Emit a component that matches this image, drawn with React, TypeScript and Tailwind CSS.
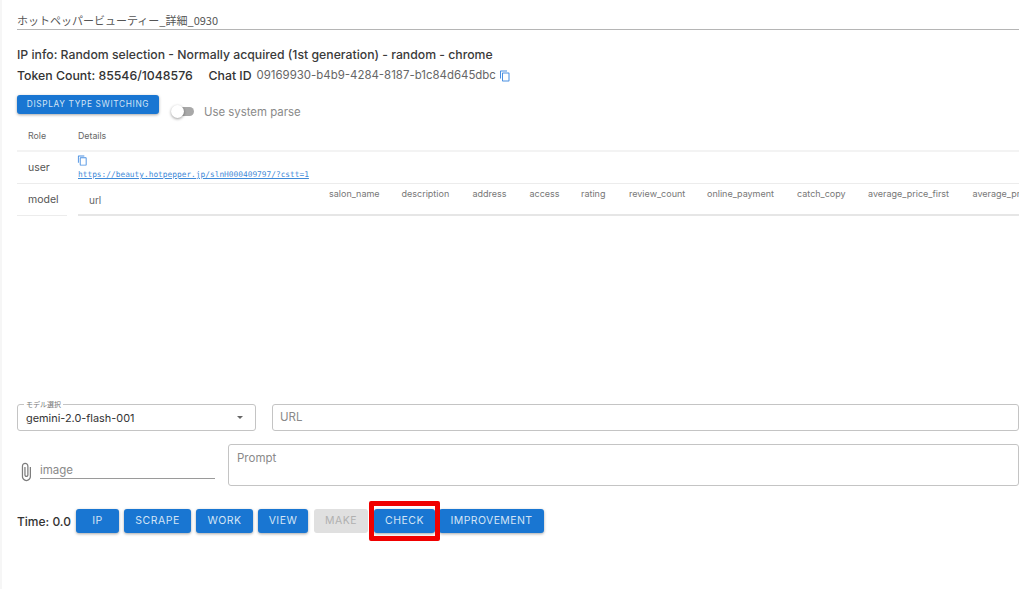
import React from "react";

function CopyIcon({ className }: { className?: string }) {
  return (
    <svg viewBox="0 0 24 24" className={className} fill="currentColor">
      <path d="M16 1H4c-1.100 0-2 .9-2 2v14h2V3h12V1zm3 4H8c-1.100 0-2 .9-2 2v14c0 1.100.9 2 2 2h11c1.100 0 2-.9 2-2V7c0-1.100-.9-2-2-2zm0 16H8V7h11v14z" />
    </svg>
  );
}

const cols: [string, string][] = [
  ["salon_name", "w-[72.5px]"],
  ["description", "w-[71px]"],
  ["address", "w-[57px]"],
  ["access", "w-[51.500px]"],
  ["rating", "w-[48px]"],
  ["review_count", "w-[78px]"],
  ["online_payment", "w-[90px]"],
  ["catch_copy", "w-[71px]"],
  ["average_price_first", "w-[104.500px]"],
  ["average_price_second", "w-[120px]"],
];

function Btn({ children, disabled, className = "" }: { children: React.ReactNode; disabled?: boolean; className?: string }) {
  return (
    <div
      className={
        "flex items-center justify-center rounded-[3px] whitespace-nowrap shrink-0 " +
        (disabled
          ? "bg-[#e0e0e0] text-[#b0b0b0] "
          : "bg-[#1976d2] text-[#d3e4f5] shadow-[0_1px_3px_rgba(0,0,0,0.35)] ") +
        className
      }
    >
      {children}
    </div>
  );
}

const big = "h-6 text-[10.500px] tracking-[0.5px] ";

export default function App() {
  return (
    <div className="w-[1024px] h-[589px] overflow-hidden bg-white border-l-2 border-[#f6f6f6] pl-[15px] pr-[5px] font-['Inter','Noto_Sans_CJK_JP',sans-serif] text-[#333]">
      <div className="pt-[12px] h-[30px] border-b border-[#b5b5b5] text-[11px] leading-[17px] text-[#555] font-['Noto_Sans_CJK_JP',sans-serif]">
        ホットペッパービューティー_詳細_0930
      </div>
      <div className="mt-[17px] text-[12.250px] leading-[16px] text-[#3a3a3a] font-medium whitespace-nowrap">
        IP info: Random selection - Normally acquired (1st generation) - random - chrome
      </div>
      <div className="mt-[5px] h-[16px] flex items-center text-[12.300px] whitespace-nowrap">
        <span className="font-medium text-[#333] w-[191.500px]">Token Count: 85546/1048576</span>
        <span className="font-medium text-[#333] w-[48px]">Chat ID</span>
        <span className="text-[#666] w-[242px] text-[11.450px]">09169930-b4b9-4284-8187-b1c84d645dbc</span>
        <CopyIcon className="w-[12px] h-[12px] text-[#4a90e2]" />
      </div>
      <div className="mt-[11px] flex items-start h-[28px]">
        <Btn className="w-[142px] h-[19px] text-[8.300px] tracking-[0.65px]">DISPLAY TYPE SWITCHING</Btn>
        <div className="relative ml-[12px] mt-[10px] w-[23px] h-[14px]">
          <div className="absolute left-[3px] top-[2px] w-[20px] h-[9px] rounded-full bg-[#a8a8a8]" />
          <div className="absolute left-0 top-0 w-[13px] h-[13px] rounded-full bg-white shadow-[0_1px_3px_rgba(0,0,0,0.4)]" />
        </div>
        <span className="ml-[10px] mt-[9px] text-[11.400px] leading-[16px] text-[#8a8a8a]">Use system parse</span>
      </div>

      <div className="-mt-[5px] h-[34px] pt-[5px] pb-[2px] flex items-center border-b-2 border-[#f3f3f3] text-[8.800px] text-[#666]">
        <span className="ml-[11px] w-[50px]">Role</span>
        <span>Details</span>
      </div>
      <div className="h-[32px] flex border-b border-[#ececec]">
        <span className="ml-[11px] w-[50px] self-center text-[10.500px] text-[#555]">user</span>
        <div className="pt-[3px]">
          <CopyIcon className="w-[11px] h-[11px] -ml-[1px] text-[#4a90e2]" />
          <div className="mt-[4px] font-['DejaVu_Sans_Mono',monospace] text-[7.840px] leading-[10px] text-[#3f8ad8] underline whitespace-nowrap">
            https://beauty.hotpepper.jp/slnH000409797/?cstt=1
          </div>
        </div>
      </div>
      <div className="h-[32px] flex overflow-hidden">
        <div className="w-[50px] border-b border-[#ececec] flex items-center pl-[11px] text-[10.500px] text-[#555] shrink-0">
          model
        </div>
        <div className="ml-[11px] flex-1 min-w-0 border-b-2 border-[#e6e6e6] flex overflow-hidden text-[9px] text-[#777] whitespace-nowrap">
          <div className="w-[251px] shrink-0 pl-[11px] pt-[9px] text-[10px] text-[#666]">url</div>
          {cols.map(([name, w]) => (
            <div key={name} className={w + " shrink-0 pt-[3px]"}>
              {name}
            </div>
          ))}
        </div>
      </div>

      <div className="mt-[188px] flex gap-[16px]">
        <div className="relative w-[239px] h-[27px] border border-[#c4c4c4] rounded-[3px] flex items-center pl-[8px] pt-[1px] text-[10.900px] text-[#333]">
          <span className="absolute left-[6px] -top-[5px] bg-white px-[2px] text-[7px] leading-[9px] text-[#777] font-['Noto_Sans_CJK_JP',sans-serif]">
            モデル選択
          </span>
          gemini-2.0-flash-001
          <span className="absolute right-[12px] top-[11px] w-0 h-0 border-x-[3.500px] border-x-transparent border-t-[3.500px] border-t-[#666]" />
        </div>
        <div className="flex-1 h-[27px] border border-[#c4c4c4] rounded-[3px] flex items-center pl-[7px] pt-[1px] text-[11.500px] text-[#8a8a8a]">
          URL
        </div>
      </div>
      <div className="mt-[13px] flex">
        <svg viewBox="0 0 24 24" className="w-[20px] h-[20px] mt-[18px] -ml-[1px] -mr-[3px] text-[#7d7d7d]" fill="currentColor">
          <path d="M16.500 6v11.500c0 2.210-1.790 4-4 4s-4-1.790-4-4V5c0-1.380 1.120-2.500 2.500-2.500s2.500 1.120 2.500 2.500v10.500c0 .55-.45 1-1 1s-1-.45-1-1V6H10v9.500c0 1.380 1.120 2.500 2.500 2.500s2.500-1.120 2.500-2.500V5c0-2.210-1.790-4-4-4S7 2.790 7 5v12.500c0 3.040 2.460 5.500 5.500 5.500s5.500-2.460 5.500-5.500V6h-1.500z" />
        </svg>
        <div className="ml-[7px] w-[175px] h-[35px] border-b border-[#9a9a9a] flex items-end text-[11.500px] leading-[16px] text-[#8a8a8a]">
          image
        </div>
        <div className="ml-[13px] flex-1 h-[42px] border border-[#c4c4c4] rounded-[3px] pl-[8px] pt-[5px] text-[11.500px] leading-[16px] text-[#8a8a8a]">
          Prompt
        </div>
      </div>
      <div className="mt-[23px] flex items-center">
        <span className="w-[59px] pt-[1px] text-[12px] font-medium text-[#333]">Time: 0.0</span>
        <Btn className={big + "w-[43px] mr-[5px]"}>IP</Btn>
        <Btn className={big + "w-[67px] mr-[5px]"}>SCRAPE</Btn>
        <Btn className={big + "w-[57px] mr-[5px]"}>WORK</Btn>
        <Btn className={big + "w-[50px] mr-[6px]"}>VIEW</Btn>
        <Btn disabled className={big + "w-[54px] mr-[5px]"}>MAKE</Btn>
        <div className="relative ml-[1px]">
          <Btn className={big + "w-[61px] mr-[4px]"}>CHECK</Btn>
          <div className="absolute -left-[5px] -top-[8px] w-[71px] h-[40px] border-[5px] border-[#f00000] rounded-[2px]" />
        </div>
        <Btn className="h-6 text-[10.500px] tracking-[0.4px] w-[105px]">IMPROVEMENT</Btn>
      </div>
    </div>
  );
}
